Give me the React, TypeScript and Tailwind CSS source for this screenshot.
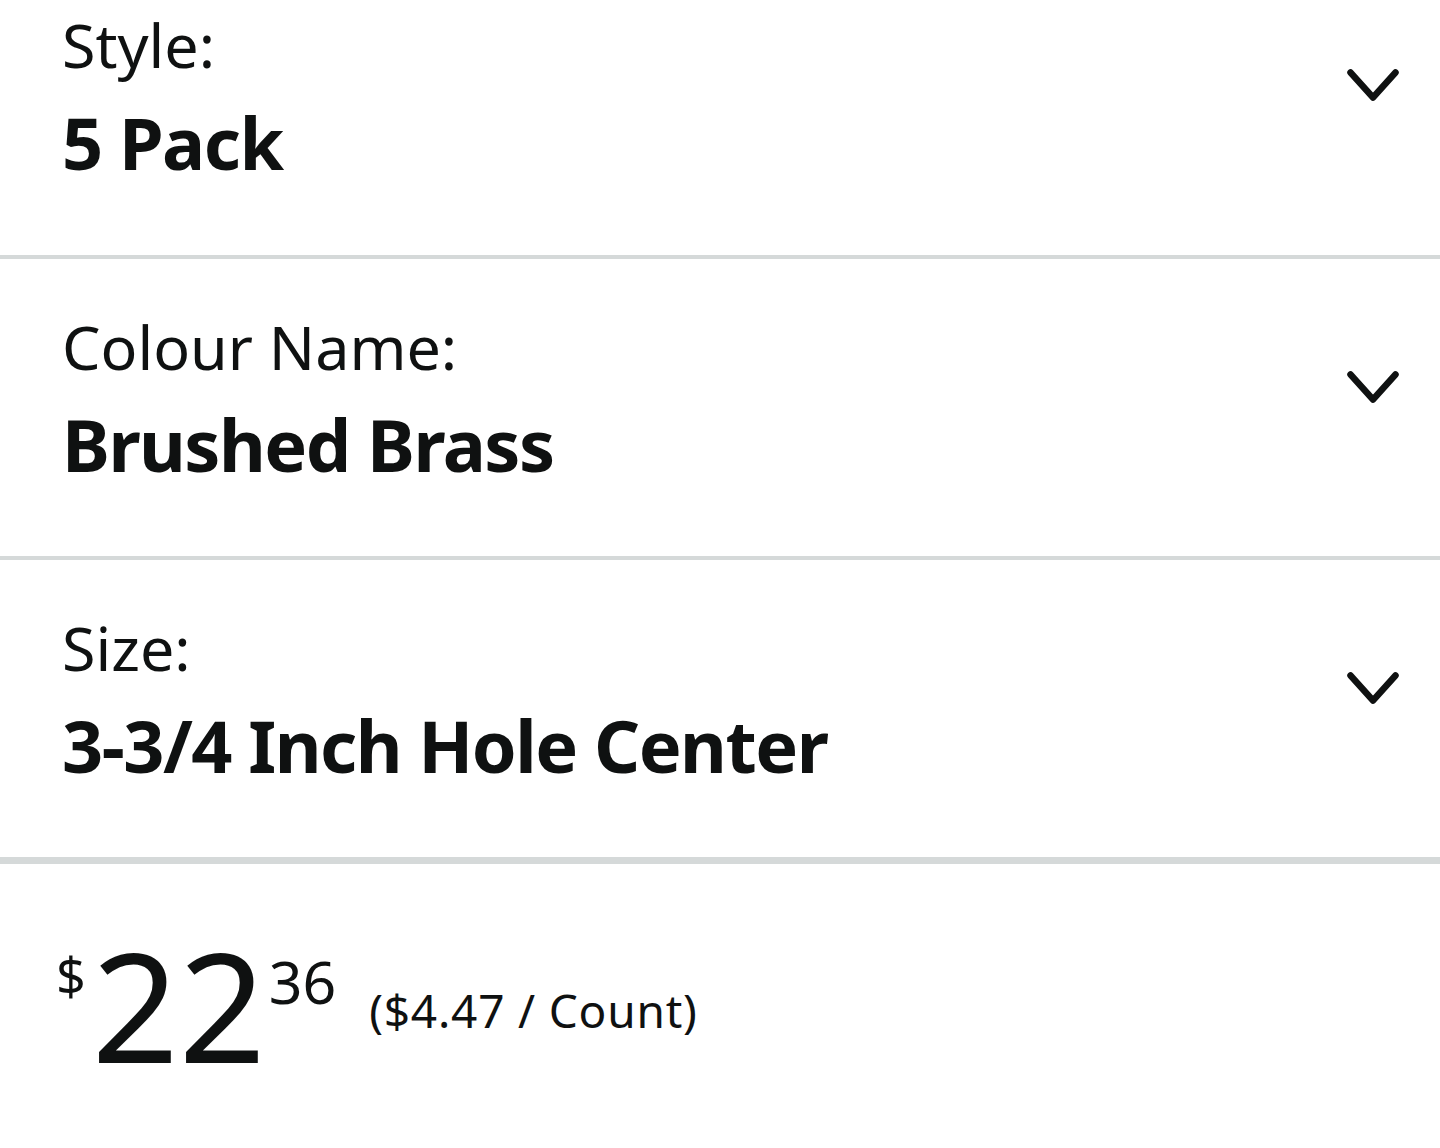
type Variation = {
  label: string;
  value: string;
};

const variations: Variation[] = [
  { label: "Style:", value: "5 Pack" },
  { label: "Colour Name:", value: "Brushed Brass" },
  { label: "Size:", value: "3-3/4 Inch Hole Center" },
];

function Chevron() {
  return (
    <svg width="52" height="34" viewBox="0 0 52 34" fill="none" className="shrink-0">
      <polyline
        points="3.5,3.5 26,28.5 48.5,3.5"
        stroke="#0f1111"
        strokeWidth="6.5"
        strokeLinecap="round"
        strokeLinejoin="round"
      />
    </svg>
  );
}

function VariationRow({ item, first }: { item: Variation; first?: boolean }) {
  return (
    <div
      className={
        first
          ? "flex justify-between h-[298px] -mt-[43px] pl-[62px] pr-[41px] pt-[51px]"
          : "flex justify-between h-[297px] pl-[62px] pr-[41px] pt-[51px]"
      }
    >
      <div className="flex flex-col gap-[18px]">
        <div className="text-[61px] leading-[1.2] text-[#0f1111]">{item.label}</div>
        <div className="text-[72px] leading-[1.2] font-bold tracking-[-1.5px] text-[#0f1111]">
          {item.value}
        </div>
      </div>
      <div className="mt-[61px]">
        <Chevron />
      </div>
    </div>
  );
}

export default function App() {
  return (
    <div
      className="w-[1440px] h-[1148px] overflow-hidden bg-white"
      style={{ fontFamily: '"Noto Sans", "Open Sans", sans-serif' }}
    >
      {variations.map((v, i) => (
        <div key={v.label}>
          <VariationRow item={v} first={i === 0} />
          <div className={i === 2 ? "h-[7px] bg-[#d5d9d9]" : "h-[4px] bg-[#d5d9d9]"} />
        </div>
      ))}

      <div className="flex items-start pl-[56px] pt-[65px] text-[#0f1111]">
        <span className="text-[52px] leading-none mt-[21px]">$</span>
        <span className="text-[152px] leading-none ml-[6px]">22</span>
        <span className="text-[59px] leading-none mt-[23px] ml-[3px]">36</span>
        <span className="text-[46px] leading-none tracking-[0.8px] mt-[58px] ml-[33px]">
          ($4.47 / Count)
        </span>
      </div>
    </div>
  );
}
